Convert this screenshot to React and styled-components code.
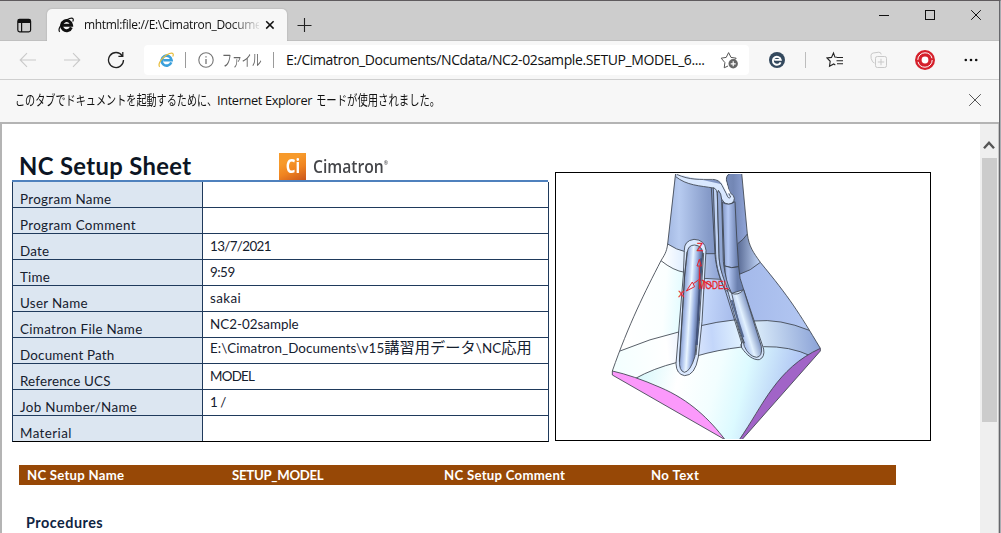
import React from "react";
import styled, { createGlobalStyle } from "styled-components";

const Global = createGlobalStyle`
  * { box-sizing: border-box; }
  body { margin: 0; background: #fff; overflow: hidden; }
`;

const ui = `"Open Sans", "Noto Sans CJK JP", sans-serif`;
const sheet = `Lato, "Noto Sans CJK JP", sans-serif`;

const Window = styled.div`
  width: 1001px;
  height: 533px;
  display: flex;
  flex-direction: column;
  background: #f7f7f7;
  border-top: 1px solid #5f5b5e;
  border-right: 1px solid #a9adb2;
  font-family: ${ui};
  color: #111;
  overflow: hidden;
`;

const Frame = styled.div`
  flex: 1;
  min-height: 0;
  display: flex;
  flex-direction: column;
  border-right: 1px solid #66676b;
`;

const TitleBar = styled.header`
  height: 40px;
  flex: none;
  display: flex;
  align-items: flex-end;
  background: #cdcdcd;
  border-bottom: 1px solid #c0c0c0;
`;

const TabMenu = styled.div`
  width: 47px;
  height: 39px;
  padding: 15px 0 0 17px;
`;

const Tab = styled.div`
  width: 240px;
  height: 32px;
  margin-bottom: -1px;
  display: flex;
  align-items: center;
  padding: 0 10px 0 11px;
  background: #f7f7f7;
  border-radius: 5px 5px 0 0;
  box-shadow: 0 0 2px rgba(0, 0, 0, 0.2);
  clip-path: inset(-3px -3px 0 -3px);
`;

const TabTitle = styled.span`
  width: 175px;
  margin-left: 10px;
  font-size: 12px;
  line-height: 18px;
  letter-spacing: -0.32px;
  white-space: nowrap;
  mask-image: linear-gradient(90deg, #000 146px, transparent 178px);
`;

const TabClose = styled.span`
  margin-left: 6px;
  line-height: 0;
`;

const NewTab = styled.div`
  height: 39px;
  padding: 15px 0 0 10px;
`;

const Controls = styled.div`
  margin-left: auto;
  height: 39px;
  padding: 8px 17px 0 0;
  display: flex;
  gap: 34px;
`;

const Toolbar = styled.div`
  height: 39px;
  flex: none;
  display: flex;
  align-items: center;
  border-bottom: 1px solid #cfcfcf;
`;

const Slot = styled.div`
  flex: none;
  width: ${(p) => p.$w}px;
  height: 38px;
  display: flex;
  align-items: center;
  justify-content: center;
`;

const Address = styled.div`
  width: 605px;
  height: 30px;
  flex: none;
  display: flex;
  align-items: center;
  justify-content: space-between;
  padding: 0 11px 0 14px;
  background: #fff;
  border-radius: 4px;
`;

const AddressText = styled.div`
  display: flex;
  align-items: center;
`;

const Divider = styled.i`
  flex: none;
  width: 1px;
  height: 16px;
  background: ${(p) => p.$color || "#9a9a9a"};
  margin: 0 ${(p) => p.$after || 0}px 0 ${(p) => p.$before || 0}px;
`;

const Narrow = styled.span`
  flex: none;
  display: inline-block;
  width: ${(p) => p.$w}px;
  margin-left: ${(p) => p.$before || 0}px;
  white-space: nowrap;
  font-size: ${(p) => p.$size || 14}px;
  line-height: 20px;
  color: ${(p) => p.$color || "inherit"};

  & > span {
    display: inline-block;
    transform: scaleX(${(p) => p.$scale});
    transform-origin: 0 50%;
  }
`;

const Url = styled.span`
  flex: none;
  margin-left: 12px;
  font-size: 14px;
  line-height: 20px;
  letter-spacing: -0.39px;
  white-space: nowrap;
`;

const Notice = styled.div`
  height: 44px;
  flex: none;
  display: flex;
  align-items: center;
  padding: 0 17px 3px 15px;
  border-bottom: 2px solid #b4b4b4;
`;

const NoticeText = styled.span`
  font-size: 12.8px;
  line-height: 20px;
  letter-spacing: -0.38px;
  white-space: nowrap;
  margin-right: 4px;
`;

const Push = styled.div`
  margin-left: auto;
  display: flex;
`;

const Viewport = styled.div`
  flex: 1;
  min-height: 0;
  display: flex;
  border-left: 2px solid #b4b4b4;
  border-right: 1px solid #c4c4c4;
  background: #fff;
`;

const Page = styled.main`
  flex: 1;
  min-width: 0;
  overflow: hidden;
  font-family: ${sheet};
  color: #15202e;
`;

const ScrollBar = styled.div`
  width: 18px;
  flex: none;
  display: flex;
  flex-direction: column;
  align-items: center;
  background: #efefef;
`;

const ScrollArrow = styled.div`
  height: 34px;
  padding-top: 16px;
  line-height: 0;
`;

const Thumb = styled.div`
  width: 15px;
  height: 264px;
  background: #cccccc;
`;

const Top = styled.div`
  display: flex;
  padding-left: 10px;
`;

const Summary = styled.section`
  width: 537px;
`;

const Heading = styled.div`
  height: 56px;
  display: flex;
  padding-left: 7px;
`;

const Title = styled.h1`
  margin: 0;
  padding-top: 28px;
  width: 260px;
  font-size: 23.8px;
  line-height: 28px;
  font-weight: 700;
  letter-spacing: 0.35px;
  color: #0c1524;
  white-space: nowrap;
`;

const Brand = styled.div`
  display: flex;
  padding-top: 29px;
`;

const BrandMark = styled.div`
  width: 27px;
  height: 27px;
  color: #fff;
  font: 700 19px/26px "Open Sans", sans-serif;
  text-align: center;
  background: linear-gradient(155deg, #f79a2b 0 30%, #f08420 60%, #c9551c);

  & > span {
    display: inline-block;
    transform: scaleX(0.8);
    margin: 0 -4px;
  }
`;

const BrandName = styled.div`
  margin-left: 7px;
  width: 76px;
  font: 600 18px/26px "Open Sans", sans-serif;
  color: #45464a;
  white-space: nowrap;

  & > span {
    display: inline-block;
    transform: scaleX(0.87);
    transform-origin: 0 50%;
  }

  sup {
    font-size: 6px;
    line-height: 0;
    vertical-align: 8px;
  }
`;

const Table = styled.div`
  border-left: 1px solid #1f3a5c;
  border-right: 1px solid #1f3a5c;
  border-bottom: 1px solid #000;
`;

const Rule = styled.div`
  height: 2px;
  margin: 0 1px 0 0;
  background: #4f81bd;
`;

const Row = styled.div`
  display: flex;
  height: ${(p) => (p.$last ? 25 : 26)}px;
  border-bottom: ${(p) => (p.$last ? "none" : "1px solid #1f3a5c")};
  font-size: 13.4px;
  line-height: 16px;
  white-space: nowrap;
`;

const Label = styled.div`
  width: 190px;
  display: flex;
  align-items: flex-end;
  padding-left: 7px;
  background: #dce6f1;
  border-right: 1px solid #1f3a5c;
  letter-spacing: ${(p) => p.$track}px;
`;

const Value = styled.div`
  display: flex;
  align-items: flex-end;
  padding: 0 0 ${(p) => (p.$raised ? 7 : 5)}px 7px;
  letter-spacing: ${(p) => p.$track}px;
`;

const Kanji = styled.span`
  font-size: 15.2px;
`;

const Preview = styled.section`
  width: 376px;
  height: 269px;
  margin: 48px 0 0 6px;
  border: 1px solid #000;
  line-height: 0;
`;

const Banner = styled.div`
  width: 877px;
  height: 20px;
  margin: 23px 0 0 17px;
  padding-left: 8px;
  display: grid;
  grid-template-columns: 205px 212px 207px 1fr;
  background: #974806;
  color: #fff;
  font-size: 13.2px;
  font-weight: 700;
  line-height: 21px;
  white-space: nowrap;
`;

const Cell = styled.span`
  letter-spacing: ${(p) => p.$track || 0}px;
`;

const SectionTitle = styled.h2`
  margin: 28px 0 0 24px;
  font-size: 14.4px;
  line-height: 20px;
  font-weight: 700;
  letter-spacing: 0.5px;
  color: #0f2442;
`;

const Svg = ({ w, h, children }) => (
  <svg width={w} height={h} viewBox={`0 0 ${w} ${h}`} fill="none">
    {children}
  </svg>
);

const IeGlyph = ({ size, color, ring, thin }) => (
  <svg width={size} height={size} viewBox="0 0 16 16" fill="none">
    <path d="M13.3 10.4A5 5 0 1 1 13.6 8.2H5.2" stroke={color} strokeWidth={thin ? 2.6 : 3} />
    <path
      d="M1.8 14.8C-.3 13 2.3 8 6.2 4.7 9.7 1.7 14 .1 15 1.7c.5.8.2 1.9-.3 2.9"
      stroke={ring}
      strokeWidth="1.2"
    />
  </svg>
);

const path = (
  <span>
    E:\Cimatron_Documents\v15<Kanji>講習用データ</Kanji>\NC<Kanji>応用</Kanji>
  </span>
);

const rows = [
  { label: "Program Name", lt: 0.32 },
  { label: "Program Comment", lt: 0.35 },
  { label: "Date", lt: 0.2, value: "13/7/2021", vt: -0.63 },
  { label: "Time", lt: 0.2, value: "9:59", vt: -0.5 },
  { label: "User Name", lt: 0.3, value: "sakai", vt: 0.4 },
  { label: "Cimatron File Name", lt: 0.32, value: "NC2-02sample", vt: 0 },
  { label: "Document Path", lt: 0.2, value: path, vt: 0.07, raised: true },
  { label: "Reference UCS", lt: 0.16, value: "MODEL", vt: -0.75 },
  { label: "Job Number/Name", lt: 0.33, value: "1 /", vt: -0.5 },
  { label: "Material", lt: 0.4 },
];

const Model = () => (
  <svg width="374" height="267" viewBox="18 24 1122 801" fill="none">
    <defs>
      <linearGradient id="neck" x1="350" y1="0" x2="600" y2="0" gradientUnits="userSpaceOnUse">
        <stop offset="0" stopColor="#a3b8e2" />
        <stop offset=".15" stopColor="#b7cbf0" />
        <stop offset=".5" stopColor="#869bc9" />
        <stop offset=".8" stopColor="#7387b5" />
        <stop offset="1" stopColor="#98ace0" />
      </linearGradient>
      <linearGradient id="flare" x1="340" y1="0" x2="630" y2="0" gradientUnits="userSpaceOnUse">
        <stop offset="0" stopColor="#fff" />
        <stop offset=".2" stopColor="#e2efff" />
        <stop offset=".55" stopColor="#93a8d8" />
        <stop offset=".78" stopColor="#5d6f99" />
        <stop offset="1" stopColor="#c3d6f8" />
      </linearGradient>
      <linearGradient id="body" x1="230" y1="440" x2="780" y2="480" gradientUnits="userSpaceOnUse">
        <stop offset="0" stopColor="#fff" />
        <stop offset=".2" stopColor="#fbffff" />
        <stop offset=".3" stopColor="#e2fbff" />
        <stop offset=".42" stopColor="#c3d6fa" />
        <stop offset=".6" stopColor="#a4b9ea" />
        <stop offset="1" stopColor="#b3c7f2" />
      </linearGradient>
      <linearGradient id="band" x1="200" y1="560" x2="800" y2="500" gradientUnits="userSpaceOnUse">
        <stop offset="0" stopColor="#f4ffff" />
        <stop offset=".25" stopColor="#fff" />
        <stop offset=".48" stopColor="#c3d6fa" />
        <stop offset=".65" stopColor="#e5f6ff" />
        <stop offset="1" stopColor="#8ea5d8" />
      </linearGradient>
      <linearGradient id="foot" x1="280" y1="590" x2="720" y2="700" gradientUnits="userSpaceOnUse">
        <stop offset="0" stopColor="#d9f8fb" />
        <stop offset=".25" stopColor="#fff" />
        <stop offset=".5" stopColor="#f2feff" />
        <stop offset=".68" stopColor="#dcfaff" />
        <stop offset="1" stopColor="#b1c7f4" />
      </linearGradient>
      <linearGradient id="rod" x1="404" y1="300" x2="456" y2="303.3" gradientUnits="userSpaceOnUse">
        <stop offset="0" stopColor="#7d93c2" />
        <stop offset=".25" stopColor="#b5c9f0" />
        <stop offset=".45" stopColor="#eaf6ff" />
        <stop offset=".7" stopColor="#9cb3e4" />
        <stop offset="1" stopColor="#4c5d88" />
      </linearGradient>
      <linearGradient id="post" x1="516" y1="0" x2="562" y2="0" gradientUnits="userSpaceOnUse">
        <stop offset="0" stopColor="#7c91c0" />
        <stop offset=".4" stopColor="#b5c9f5" />
        <stop offset="1" stopColor="#6a7fae" />
      </linearGradient>
      <linearGradient id="leg" x1="566" y1="480" x2="618" y2="464" gradientUnits="userSpaceOnUse">
        <stop offset="0" stopColor="#a9bfec" />
        <stop offset=".35" stopColor="#e3f2ff" />
        <stop offset="1" stopColor="#6179b2" />
      </linearGradient>
      <clipPath id="shot"><rect x="18" y="27" width="1122" height="795" /></clipPath>
    </defs>
    <g clipPath="url(#shot)" stroke="#3f4650" strokeWidth="2.6" strokeLinejoin="round">
      <path stroke="none" fill="url(#body)" d="M333 287C285 380 236 478 187 618Q250 632 330 667C420 705 480 765 525 824H568C620 745 660 625 811 550C745 440 720 400 631 292Q480 360 333 287Z" />
      <path stroke="none" fill="url(#band)" d="M210 558Q300 520 390 500L443 484Q500 470 560 464L612 468Q690 460 778 496L811 550L783 573L255 641L187 618Z" />
      <path stroke="none" fill="url(#foot)" d="M255 641Q310 610 382 592L440 573Q500 555 575 548L640 545Q720 545 783 573C665 640 620 745 568 824H525C450 730 370 665 255 641Z" />
      <path stroke="none" fill="url(#flare)" d="M353 237C350 262 342 272 333 287Q390 325 460 338L530 343Q590 325 631 292C610 262 597 245 592 207L500 190Z" />
      <path stroke="none" fill="url(#neck)" d="M376 24L353 237Q380 255 406 260L468 266H505L563 236Q580 225 592 207L575 24Z" />
      <path d="M377 24L353 237C350 262 342 272 333 287C285 380 236 478 187 618M575 24L592 207C597 245 610 262 631 292C720 400 745 440 811 550" />
      <path d="M353 237Q380 255 406 260M333 287Q370 317 404 322M592 207Q580 225 563 236M631 292Q602 318 568 328M468 266H505M462 340L515 343" />
      <path d="M210 558Q300 520 390 500M443 484Q500 470 560 464M612 468Q690 460 778 496M255 641Q310 610 382 592M440 573Q500 555 575 546M640 545Q720 543 783 573" />
      <path fill="#fb99fb" d="M187 618Q250 632 330 667C420 705 480 765 525 824L187 630Z" />
      <path fill="#a164c7" d="M811 550C680 610 640 720 568 824H576L811 558Z" />

      <path fill="#fff" stroke="none" d="M376 24L381 31C420 46 450 44 490 44Q510 45 516 60L533 98H543L525 50L532 24Z" />
      <path fill="#d9e8ff" d="M376 34C410 62 450 62 490 69L516 104Q522 117 536 118Q552 115 553 100Q552 90 542 85L537 76L529 44Q527 32 540 25M380 28C420 46 450 43 488 43Q508 44 516 61L529 86Q535 105 542 96L522 59" />
      <path fill="#fff" stroke="none" d="M384 22C420 42 450 41 490 41Q511 43 518 58L532 86L541 84L535 72L527 46Q526 32 538 22Z" />
      <path d="M484 69L495 268C498 310 512 350 526 377L577 540" />
      <path fill="#bfd2f5" d="M490 68Q503 72 502 95L507 268C508 310 518 325 530 362L548 389L526 375C510 340 499 310 497 268Z" />
      <path fill="#91a6d2" d="M505 76Q514 85 515 103L520 290C524 330 535 355 548 389L531 368C516 330 507 300 507 266L502 85Z" />
      <path fill="url(#post)" d="M517 112Q537 124 555 110L560 213L566 305Q545 312 524 303Z" />
      <path fill="url(#post)" d="M524 303Q545 312 566 305Q567 340 581 374Q565 393 545 385Q525 345 524 303Z" />
      <path fill="#d2e3fb" d="M531 370C545 420 555 460 577 530Q570 540 575 548C590 571 610 586 628 584Q645 577 641 552L581 374L545 385Z" />
      <path fill="url(#leg)" d="M545 385Q565 393 581 374L634 544Q638 575 620 577Q596 574 583 544Z" />
      <path d="M560 464Q570 507 584 535M577 530Q571 540 575 548" />
      <path d="M545 405L580 517" stroke="#566990" strokeWidth="6" />

      <path fill="#dbe9ff" d="M403 256Q402 227 432 223Q465 224 468 256L456 470L445 576Q435 632 404 632Q379 628 378 596L400 330Z" />
      <path fill="url(#rod)" d="M412 262Q414 240 434 240Q456 242 458 263L443 480L435 574Q421 620 403 622Q386 617 389 585L404 330Z" />
      <path d="M461 264L448 470L438 570M411 260L404 330L388 590" />
      <path d="M454 280L440 540" stroke="#43537c" strokeWidth="6" />
    </g>
    <g stroke="#e8232c" strokeWidth="3">
      <path d="M448 283L441 303H454ZM448 304V343L430 356M427 351L409 378L434 365Z" />
      <path d="M449 325V368M456 345L487 365" strokeWidth="4" />
    </g>
    <g fill="#e8232c" stroke="#e8232c" strokeWidth=".8" fontFamily="'Liberation Sans', sans-serif" fontSize="31">
      <text x="440" y="257">Z</text>
      <text x="385" y="396" fontSize="28">X</text>
      <text x="445" y="372" textLength="90" lengthAdjust="spacingAndGlyphs">MODEL</text>
    </g>
  </svg>
);

export default function App() {
  return (
    <Window>
      <Global />
      <Frame>
        <TitleBar>
          <TabMenu>
            <Svg w={15} h={15}>
              <rect x=".8" y="1.4" width="12.8" height="12.4" rx="1.8" stroke="#111" strokeWidth="1.2" />
              <path d="M1 2.8h12.4M1 4h12.4" stroke="#111" strokeWidth="2" />
              <path d="M4.6 4v10" stroke="#111" strokeWidth="1.2" />
            </Svg>
          </TabMenu>
          <Tab>
            <IeGlyph size={16} color="#111" ring="#111" />
            <TabTitle>mhtml:file://E:\Cimatron_Docume</TabTitle>
            <TabClose>
              <Svg w={10} h={10}>
                <path d="M1.2 1.2l7.4 7.4M8.6 1.2L1.2 8.6" stroke="#111" strokeWidth="1.5" />
              </Svg>
            </TabClose>
          </Tab>
          <NewTab>
            <Svg w={16} h={16}>
              <path d="M7.5 1v14M.5 8.5h14" stroke="#222" strokeWidth="1.1" />
            </Svg>
          </NewTab>
          <Controls>
            <Svg w={12} h={12}><path d="M1 6.5h10" stroke="#111" /></Svg>
            <Svg w={12} h={12}><rect x="1.5" y="1.5" width="9" height="9" stroke="#111" /></Svg>
            <Svg w={12} h={12}><path d="M1.2 1.2l9.6 9.6M10.8 1.2L1.2 10.8" stroke="#111" /></Svg>
          </Controls>
        </TitleBar>

        <Toolbar>
          <Slot $w={56}>
            <Svg w={18} h={16}><path d="M17 8H1.5M8 1.2L1.2 8 8 14.8" stroke="#c9c9c9" strokeWidth="1.1" /></Svg>
          </Slot>
          <Slot $w={32}>
            <Svg w={18} h={16}><path d="M1 8h15.5M10 1.2L16.8 8 10 14.8" stroke="#c9c9c9" strokeWidth="1.1" /></Svg>
          </Slot>
          <Slot $w={56}>
            <Svg w={18} h={18}>
              <path d="M15.2 4.8A7.5 7.5 0 1 0 16.5 9M15.8 1v4.4h-4.4" stroke="#222" strokeWidth="1.3" />
            </Svg>
          </Slot>
          <Address>
            <AddressText>
              <IeGlyph size={16} color="#3ba0dc" ring="#e8bd3c" thin />
              <Divider $before={11} $after={12} />
              <Svg w={16} h={16}>
                <circle cx="8" cy="8" r="7.2" stroke="#767676" strokeWidth="1.1" />
                <path d="M8 7v5M8 4.2v1.4" stroke="#767676" strokeWidth="1.3" />
              </Svg>
              <Narrow $w={51} $before={8} $size={15.5} $scale={0.64} $color="#666">
                <span>ファイル</span>
              </Narrow>
              <Divider />
              <Url>E:/Cimatron_Documents/NCdata/NC2-02sample.SETUP_MODEL_6....</Url>
            </AddressText>
            <Svg w={18} h={18}>
              <path d="M8 15l-3.8 1.8.7-5.2L1.2 7.2l5-.8L8.6 1.6l2.4 4.8 5.2.8-1.8 1.8" stroke="#555" />
              <circle cx="13.2" cy="12.8" r="4.7" fill="#666" />
              <path d="M13.2 10.3v5M10.7 12.8h5" stroke="#fff" strokeWidth="1.2" />
            </Svg>
          </Address>
          <Slot $w={56}>
            <Svg w={18} h={18}>
              <circle cx="9" cy="9" r="8" fill="#34495e" />
              <path d="M12.6 11.3a4 4 0 1 1 .2-2.4H6.3" stroke="#fff" strokeWidth="1.9" />
            </Svg>
          </Slot>
          <Divider $color="#bdbdbd" />
          <Slot $w={58}>
            <Svg w={18} h={18}>
              <path d="M11 6.3L8.9 6.1 7.5 2 5.5 6.4 1 7l3.2 3.3-.7 5L7.7 13l1.6.9M11 6.5h6M10.5 9.7H17M11 12.8h6" stroke="#222" strokeWidth="1.1" />
            </Svg>
          </Slot>
          <Slot $w={30}>
            <Svg w={18} h={18}>
              <path d="M4.5 12L2.6 10.8Q.5 7.5 1 4.2 1.3 2.3 3.2 2L8.8 1.2Q11 1.2 11.2 3.4" stroke="#c9c9c9" />
              <rect x="5.5" y="5.5" width="11" height="11" rx="1.8" stroke="#c9c9c9" />
              <path d="M11 7.8v6.4M7.8 11h6.4" stroke="#c9c9c9" />
            </Svg>
          </Slot>
          <Slot $w={62}>
            <Svg w={22} h={22}>
              <circle cx="11" cy="11" r="10" fill="#d5202b" />
              <circle cx="11" cy="11" r="7.2" stroke="#fff" strokeWidth="1" strokeDasharray="20.6 2" />
              <circle cx="11" cy="11" r="3.4" fill="#fff" />
            </Svg>
          </Slot>
          <Slot $w={30}>
            <Svg w={14} h={4}>
              <circle cx="1.8" cy="2" r="1.3" fill="#111" />
              <circle cx="7" cy="2" r="1.3" fill="#111" />
              <circle cx="12.2" cy="2" r="1.3" fill="#111" />
            </Svg>
          </Slot>
        </Toolbar>

        <Notice>
          <Narrow $w={202} $size={13.2} $scale={0.767}>
            <span>このタブでドキュメントを起動するために、</span>
          </Narrow>
          <NoticeText>Internet Explorer</NoticeText>
          <Narrow $w={130} $size={13.2} $scale={0.785}>
            <span>モードが使用されました。</span>
          </Narrow>
          <Push>
            <Svg w={14} h={14}><path d="M1.2 1.2l11.6 11.6M12.8 1.2L1.2 12.8" stroke="#555" /></Svg>
          </Push>
        </Notice>

        <Viewport>
          <Page>
            <Top>
              <Summary>
                <Heading>
                  <Title>NC Setup Sheet</Title>
                  <Brand>
                    <BrandMark><span>Ci</span></BrandMark>
                    <BrandName><span>Cimatron<sup>®</sup></span></BrandName>
                  </Brand>
                </Heading>
                <Rule />
                <Table>
                  {rows.map((row, i) => (
                    <Row key={row.label} $last={i === rows.length - 1}>
                      <Label $track={row.lt}>{row.label}</Label>
                      <Value $track={row.vt || 0} $raised={row.raised}>{row.value}</Value>
                    </Row>
                  ))}
                </Table>
              </Summary>
              <Preview><Model /></Preview>
            </Top>
            <Banner>
              <Cell $track={0.24}>NC Setup Name</Cell>
              <Cell $track={-0.27}>SETUP_MODEL</Cell>
              <Cell $track={0.27}>NC Setup Comment</Cell>
              <Cell $track={0.4}>No Text</Cell>
            </Banner>
            <SectionTitle>Procedures</SectionTitle>
          </Page>
          <ScrollBar>
            <ScrollArrow>
              <Svg w={12} h={10}><path d="M1 8.2L6 2.8l5 5.4" stroke="#555" strokeWidth="2.4" /></Svg>
            </ScrollArrow>
            <Thumb />
          </ScrollBar>
        </Viewport>
      </Frame>
    </Window>
  );
}
